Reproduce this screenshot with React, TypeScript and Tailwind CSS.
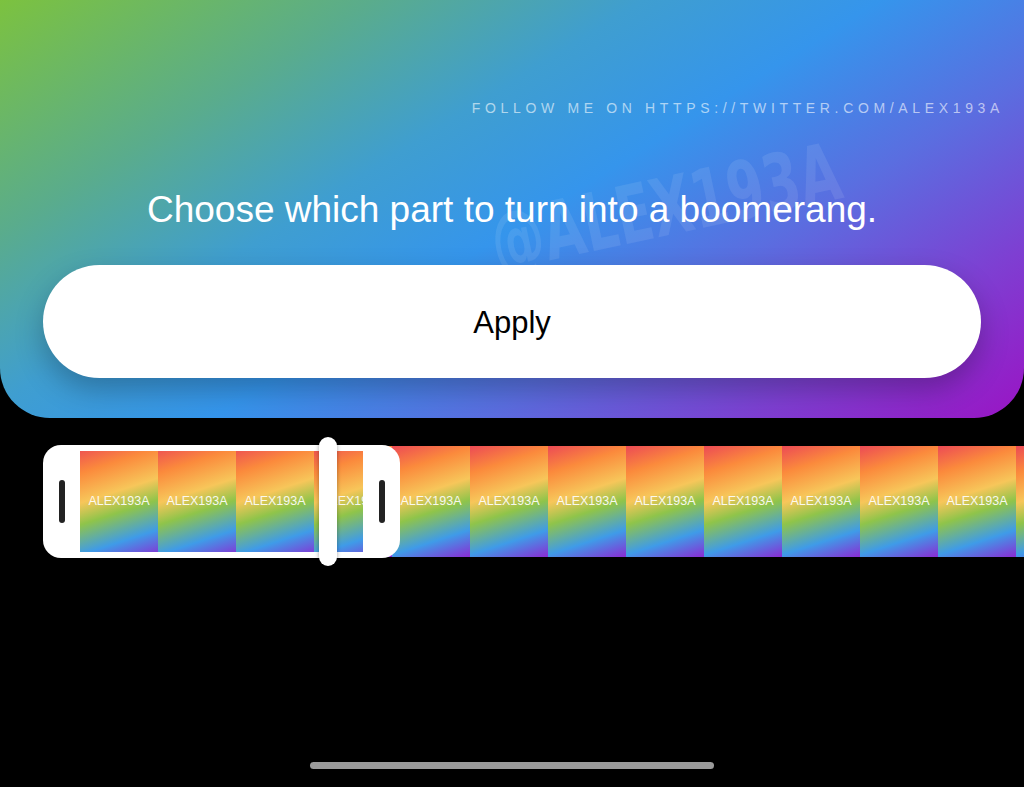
const frames = Array.from({ length: 13 });

function Thumb() {
  return (
    <div className="w-[78px] h-[111px] shrink-0 flex items-center justify-center bg-[linear-gradient(162deg,#ec4a55_0%,#fb8a3c_20%,#f7c65a_42%,#8fc44a_58%,#3f9be8_80%,#8b2bd3_100%)]">
      <span className="text-white text-[12.5px] font-['Liberation_Sans',Arial,sans-serif] opacity-90">ALEX193A</span>
    </div>
  );
}

export default function App() {
  return (
    <div className="w-[1024px] h-[787px] bg-black overflow-hidden flex flex-col font-['Liberation_Sans',Arial,sans-serif]">
      <div className="relative h-[418px] shrink-0 rounded-b-[50px] overflow-hidden flex flex-col pt-[98px] bg-[linear-gradient(148deg,#7cc23f_0%,#5aac8c_22%,#3f9ed0_38%,#3595ec_52%,#5a6ee0_68%,#7e3fd2_84%,#9a14c4_100%)]">
        <div className="absolute left-[492px] top-[205px] h-[80px] pointer-events-none -rotate-[12deg] scale-x-[0.66] origin-left">
          <span className="block text-white/[0.09] text-[80px] font-bold leading-none font-['DejaVu_Sans',sans-serif]">@ALEX193A</span>
        </div>
        <div className="relative h-[20px] leading-[20px] text-right pr-[20px] text-[14px] font-normal tracking-[4.65px] text-white/60">
          FOLLOW ME ON HTTPS://TWITTER.COM/ALEX193A
        </div>
        <h1 className="relative mt-[70px] h-[44px] leading-[44px] text-center text-white text-[37px] font-normal">
          Choose which part to turn into a boomerang.
        </h1>
        <button
          type="button"
          className="relative mt-[33px] mx-[43px] h-[113px] pt-[3px] rounded-full bg-white text-black text-[31px] shadow-[0_12px_28px_rgba(0,0,0,0.25)]"
        >
          Apply
        </button>
      </div>

      <div className="relative mt-[28px] h-[111px] shrink-0">
        <div className="flex pl-[80px] h-full overflow-hidden">
          {frames.map((_, i) => (
            <Thumb key={i} />
          ))}
        </div>

        <div className="absolute left-[43px] top-[-1px] w-[357px] h-[113px] flex">
          <div className="w-[37px] h-full bg-white rounded-l-[18px] flex items-center justify-center">
            <div className="w-[6px] h-[43px] rounded-full bg-[#222]" />
          </div>
          <div className="flex-1 border-y-[6px] border-white" />
          <div className="w-[37px] h-full bg-white rounded-r-[18px] flex items-center justify-center">
            <div className="w-[6px] h-[43px] rounded-full bg-[#222]" />
          </div>
        </div>

        <div className="absolute left-[319px] top-[-9px] w-[18px] h-[129px] rounded-full bg-white shadow-[0_0_4px_rgba(0,0,0,0.35)]" />
      </div>

      <div className="mt-[205px] mx-auto w-[404px] h-[7px] rounded-full bg-[#9b9b9b]" />
    </div>
  );
}
